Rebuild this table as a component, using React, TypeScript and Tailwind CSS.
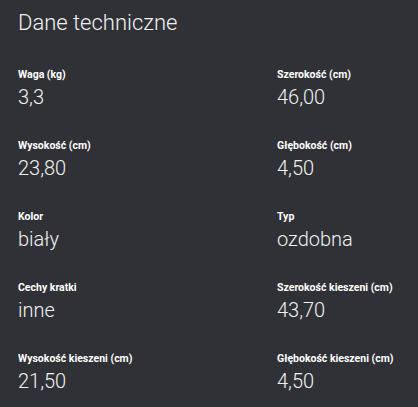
import React from "react";

const items: [string, string][] = [
  ["Waga (kg)", "3,3"],
  ["Szerokość (cm)", "46,00"],
  ["Wysokość (cm)", "23,80"],
  ["Głębokość (cm)", "4,50"],
  ["Kolor", "biały"],
  ["Typ", "ozdobna"],
  ["Cechy kratki", "inne"],
  ["Szerokość kieszeni (cm)", "43,70"],
  ["Wysokość kieszeni (cm)", "21,50"],
  ["Głębokość kieszeni (cm)", "4,50"],
];

export default function App() {
  return (
    <div
      className="w-[418px] h-[407px] bg-[#303136] pl-[18px] pt-[10px] overflow-hidden"
      style={{ fontFamily: "Roboto, 'Liberation Sans', sans-serif" }}
    >
      <h2 className="text-[22px] leading-[26px] font-light text-[#f2f2f2]">Dane techniczne</h2>
      <div className="mt-[32px] grid grid-cols-[259px_1fr] gap-y-[30px]">
        {items.map(([label, value]) => (
          <div key={label} className="flex flex-col">
            <div className="text-[10.5px] leading-[14px] font-bold text-white">{label}</div>
            <div className="mt-[3px] text-[20px] leading-[24px] font-light text-[#f2f2f2]">{value}</div>
          </div>
        ))}
      </div>
    </div>
  );
}
